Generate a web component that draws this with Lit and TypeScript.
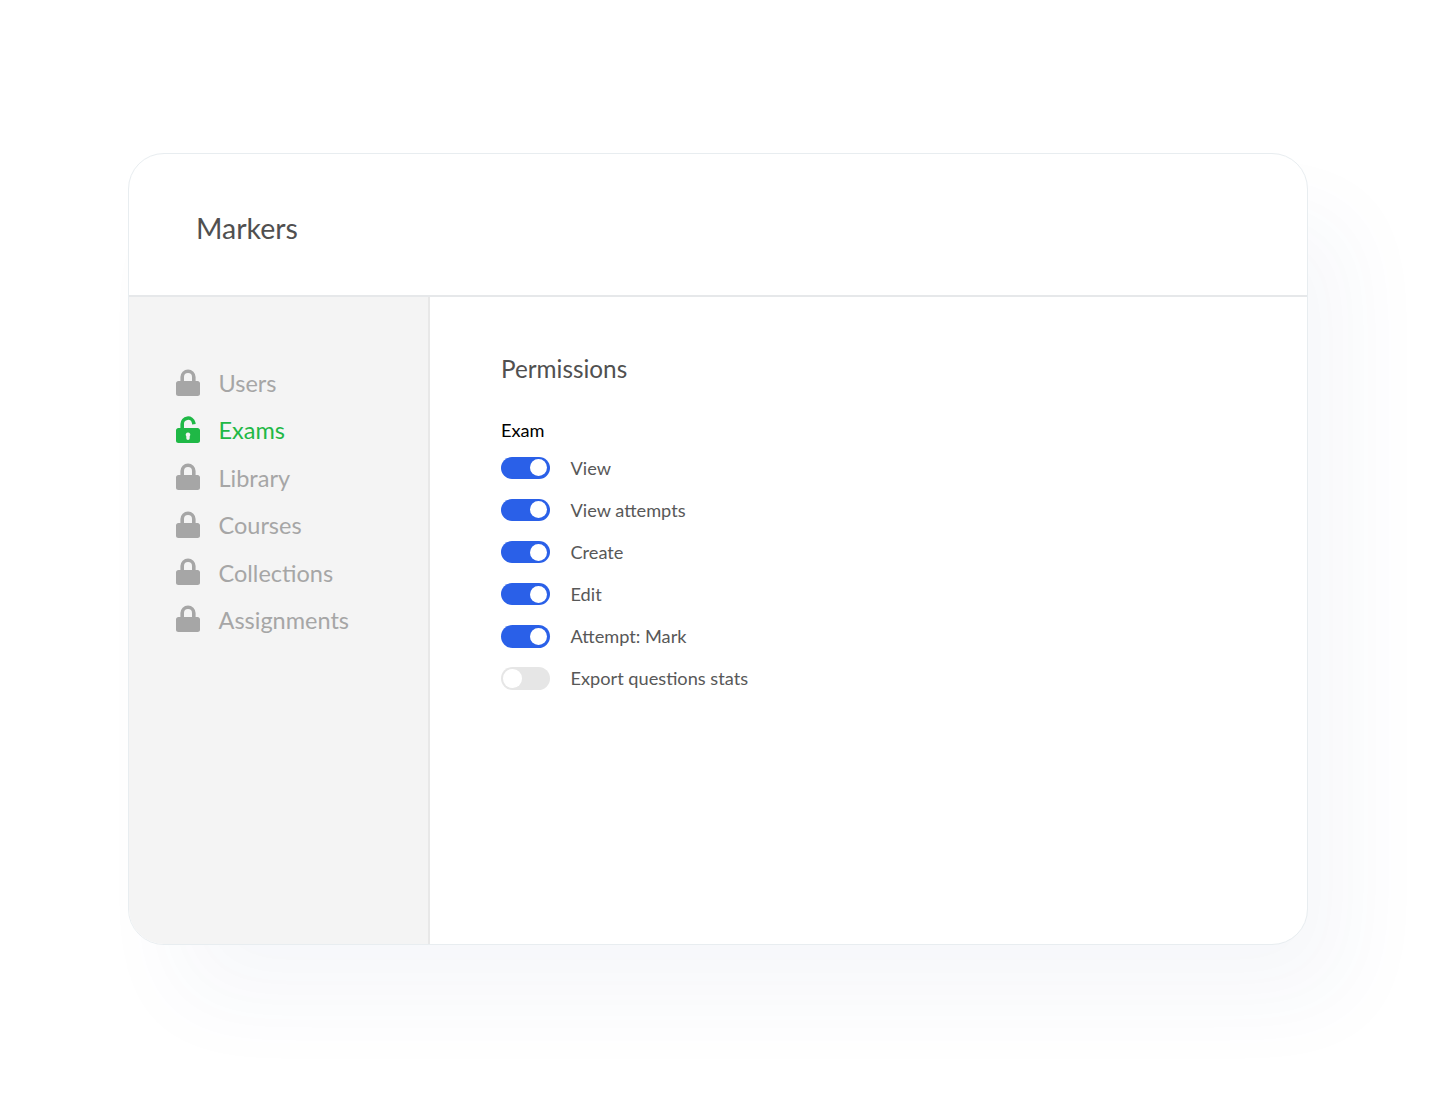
import { LitElement, html, css, svg } from "lit";
import { customElement } from "lit/decorators.js";

const lock = svg`<path fill-rule="evenodd" d="M4.400 12V8a7.600 7.600 0 0 1 15.200 0v4h2c1.300 0 2.400 1 2.400 2.300v10.400c0 1.300-1.100 2.300-2.400 2.300H2.400C1.100 27 0 26 0 24.700V14.300C0 13 1.100 12 2.400 12zM8 12h8V8a4 4 0 0 0-8 0z"/>`;
const unlock = svg`<path fill-rule="evenodd" d="M4.400 12V8a7.600 7.600 0 0 1 15-1.800l.3 1.700-3.500.6-.3-1.500A4 4 0 0 0 8 8v4h13.600c1.300 0 2.400 1 2.400 2.300v10.400c0 1.300-1.100 2.300-2.400 2.300H2.400C1.100 27 0 26 0 24.700V14.300C0 13 1.100 12 2.400 12zM12 16.500a2.300 2.300 0 0 0-1.700 3.800v1.900a1.700 1.700 0 0 0 3.400 0v-1.900A2.300 2.300 0 0 0 12 16.500z"/>`;

const NAV = [
  { label: "Users", active: false },
  { label: "Exams", active: true },
  { label: "Library", active: false },
  { label: "Courses", active: false },
  { label: "Collections", active: false },
  { label: "Assignments", active: false },
];
const PERMS = [
  { label: "View", on: true },
  { label: "View attempts", on: true },
  { label: "Create", on: true },
  { label: "Edit", on: true },
  { label: "Attempt: Mark", on: true },
  { label: "Export questions stats", on: false },
];

@customElement("app-root")
export class AppRoot extends LitElement {
  static styles = css`
    :host {
      display: block;
      width: 1436px;
      height: 1097px;
      background: #fff;
      font-family: Lato, "Liberation Sans", sans-serif;
      overflow: hidden;
      padding: 153px 0 0 128px;
      box-sizing: border-box;
    }
    .card {
      width: 1180px;
      height: 792px;
      box-sizing: border-box;
      border: 1px solid #e8edf0;
      border-radius: 36px;
      background: #fff;
      box-shadow: 45px 60px 90px -5px rgba(40, 70, 130, 0.045);
      overflow: hidden;
      display: flex;
      flex-direction: column;
    }
    .head {
      height: 143px;
      flex: none;
      box-sizing: border-box;
      border-bottom: 2px solid #e6e8ea;
      padding: 57px 0 0 67px;
      font-size: 28.5px;
      line-height: 34px;
      color: #505050;
    }
    .body { flex: 1; display: flex; min-height: 0; }
    .side {
      width: 301px;
      flex: none;
      box-sizing: border-box;
      background: #f4f4f4;
      border-right: 2px solid #e8e8e8;
      padding: 70px 0 0 47px;
      display: flex;
      flex-direction: column;
      gap: 17.4px;
    }
    .item {
      display: flex;
      align-items: center;
      gap: 18.5px;
      height: 30px;
      font-size: 23.5px;
      color: #a6a6a6;
    }
    .item span { padding-top: 2px; }
    .item svg { width: 24px; height: 27px; fill: #a6a6a6; flex: none; }
    .item.active { color: #1fb846; }
    .item.active svg { fill: #1fb846; }
    .main { flex: 1; padding: 56px 0 0 71px; }
    h2 {
      margin: 0;
      font-weight: 400;
      font-size: 24.3px;
      line-height: 32px;
      color: #505050;
    }
    h3 {
      margin: 32px 0 0;
      font-weight: 400;
      font-size: 18.2px;
      line-height: 26px;
      color: #000;
    }
    .rows { margin-top: 13.5px; display: flex; flex-direction: column; gap: 19.65px; }
    .row {
      display: flex;
      align-items: center;
      gap: 20.5px;
      height: 22.5px;
      font-size: 18.2px;
      color: #585858;
    }
    .sw {
      width: 49px;
      height: 22.5px;
      box-sizing: border-box;
      border-radius: 12px;
      background: #2a60e8;
      flex: none;
      display: flex;
      align-items: center;
      justify-content: flex-end;
      padding: 0 3px;
    }
    .sw i { display: block; width: 17px; height: 17px; border-radius: 50%; background: #fff; }
    .sw.off { background: #e6e6e6; justify-content: flex-start; padding: 0 2px; }
    .sw.off i { width: 18.5px; height: 18.5px; }
  `;

  render() {
    return html`<div class="card">
      <div class="head">Markers</div>
      <div class="body">
        <nav class="side">
          ${NAV.map(
            (n) => html`<div class="item ${n.active ? "active" : ""}">
              <svg viewBox="0 0 24 27">${n.active ? unlock : lock}</svg>
              <span>${n.label}</span>
            </div>`
          )}
        </nav>
        <section class="main">
          <h2>Permissions</h2>
          <h3>Exam</h3>
          <div class="rows">
            ${PERMS.map(
              (p) => html`<div class="row">
                <span class="sw ${p.on ? "" : "off"}"><i></i></span>
                <span>${p.label}</span>
              </div>`
            )}
          </div>
        </section>
      </div>
    </div>`;
  }
}
